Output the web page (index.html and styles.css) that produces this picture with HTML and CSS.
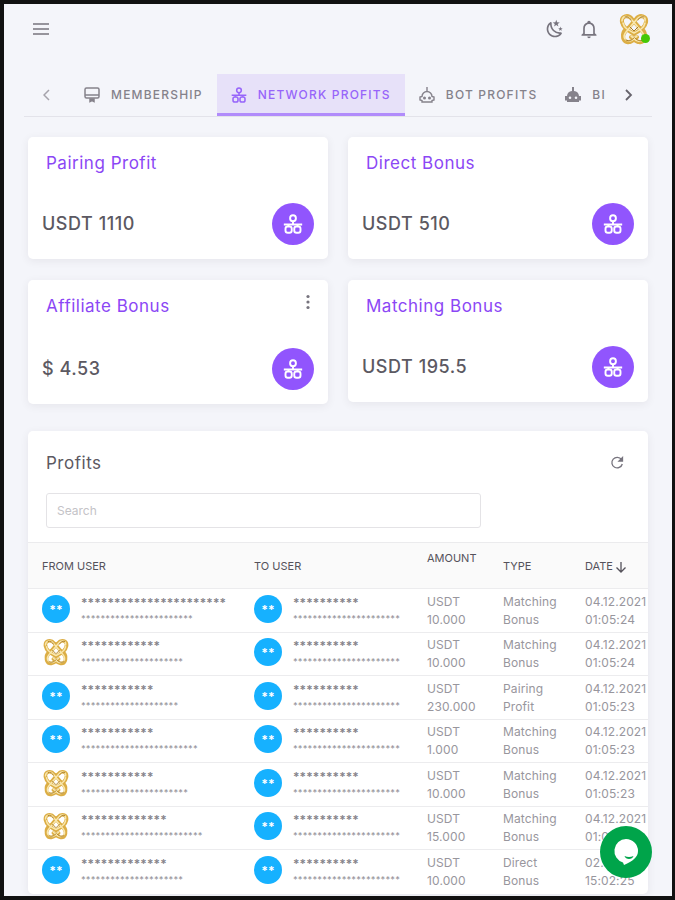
FILE: index.html
```html
<!DOCTYPE html>
<html lang="en">
<head>
    <meta charset="UTF-8">
    <meta name="viewport" content="width=device-width, initial-scale=1.0">
    <title>Network Profits</title>
    <link rel="stylesheet" href="styles.css">
</head>
<body>

    <!-- Shared icons -->
    <svg class="sprite" aria-hidden="true">
        <symbol id="network" viewBox="0 0 24 24">
            <g fill="none" stroke="currentColor" stroke-width="2.3">
                <circle cx="12" cy="5" r="3.500"/>
                <path d="M12 8.500v4M1 12.500h22M6.500 12.500v2M17.500 12.500v2"/>
                <rect x="3" y="15" width="7.500" height="7.500" rx="2.800"/>
                <rect x="13.500" y="15" width="7.500" height="7.500" rx="2.800"/>
            </g>
        </symbol>
        <symbol id="gold" viewBox="0 0 32 32">
            <g fill="none" stroke-linecap="round">
                <g stroke="#dcae45" stroke-width="4">
                    <path d="M4 9C3 3 10 1 14 6l11 13c4 5 1 11-4 10-3 0-5-3-8-5"/>
                    <path d="M28 9c1-6-6-8-10-3L7 19c-4 5-1 11 4 10 3 0 5-3 8-5"/>
                    <path d="M4 9c1 6 6 8 12 12M28 9c-1 6-6 8-12 12M10 15c-4 2-5 4-5 7M22 15c4 2 5 4 5 7"/>
                </g>
                <g stroke="#f9e7ae" stroke-width="1.600">
                    <path d="M4 8C4 3 10 2 13 6l11 13c4 5 1 10-4 9-3 0-4-3-7-5"/>
                    <path d="M27 8c1-5-5-6-8-2L8 19c-4 5-1 9 4 9 3 0 4-3 7-5"/>
                    <path d="M5 10c1 5 5 7 11 10M27 10c-1 5-5 7-11 10"/>
                </g>
                <path stroke="#a87a22" stroke-width="1" d="M7 4c3-1 5 1 6 3M26 4c-3-1-5 1-6 3M12 14l4 4 4-4M8 27c3 2 6 0 8-2M25 27c-3 2-6 0-8-2"/>
            </g>
        </symbol>
    </svg>

    <div class="app">
        <header class="topbar">
            <button class="icon-btn" aria-label="Menu">
                <svg width="16" height="12" viewBox="0 0 16 12" fill="none" stroke="currentColor" stroke-width="1.500"><path d="M0 1h16M0 6h16M0 11h16"/></svg>
            </button>
            <div class="topbar-actions">
                <button class="icon-btn" aria-label="Dark mode">
                    <svg width="20" height="20" viewBox="0 0 24 24" fill="currentColor"><path d="M17.750 4.090l-2.530 1.940.910 3.060-2.630-1.810-2.630 1.810.910-3.060-2.530-1.940L12.440 4l1.060-3 1.060 3 3.190.090m3.500 6.910l-1.640 1.250.590 1.980-1.700-1.170-1.700 1.170.590-1.980L15.750 11l2.060-.050L18.500 9l.690 1.950 2.060.050m-2.280 4.950c.830-.080 1.720 1.100 1.190 1.850-.320.450-.660.870-1.080 1.270C15.170 23 8.840 23 4.940 19.070c-3.910-3.900-3.910-10.240 0-14.140.400-.400.820-.760 1.270-1.080.750-.530 1.930.360 1.850 1.190-.270 2.860.690 5.830 2.890 8.020a9.960 9.960 0 0 0 8.020 2.890m-1.640 2.020a12.080 12.080 0 0 1-7.800-3.470c-2.170-2.190-3.330-5-3.490-7.820-2.810 3.140-2.700 7.960.310 10.980 3.020 3.010 7.840 3.120 10.980.310z"/></svg>
                </button>
                <button class="icon-btn" aria-label="Notifications">
                    <svg width="20" height="20" viewBox="0 0 24 24" fill="currentColor"><path d="M10 21h4c0 1.100-.900 2-2 2s-2-.900-2-2m11-2v1H3v-1l2-2v-6c0-3.100 2-5.800 5-6.700V4c0-1.100.900-2 2-2s2 .900 2 2v.300c3 .900 5 3.600 5 6.700v6l2 2m-4-8c0-2.800-2.200-5-5-5s-5 2.200-5 5v7h10v-7z"/></svg>
                </button>
                <button class="profile" aria-label="Account">
                    <svg width="32" height="32"><use href="#gold"/></svg>
                    <span class="online"></span>
                </button>
            </div>
        </header>

        <nav class="tabs">
            <button class="scroll-btn prev" aria-label="Previous tabs">
                <svg width="8" height="12" viewBox="0 0 8 12" fill="none" stroke="currentColor" stroke-width="1.500"><path d="M6 1L1 6l5 5"/></svg>
            </button>
            <div class="tab-list">
                <a class="tab" href="#membership">
                    <svg width="16" height="16" viewBox="0 0 16 16" fill="none" stroke="currentColor" stroke-width="1.500"><rect x="1" y="1" width="14" height="10" rx="1.500"/><path d="M1 8h14"/><path fill="currentColor" d="M6 12h4v2.500l-2-1-2 1z"/></svg>
                    Membership
                </a>
                <a class="tab active" href="#network-profits">
                    <svg width="16" height="16"><use href="#network"/></svg>
                    Network Profits
                </a>
                <a class="tab" href="#bot-profits">
                    <svg width="16" height="16" viewBox="0 0 16 16" fill="none" stroke="currentColor" stroke-width="1.400"><path d="M8 0v4.500M3 9.500a5 5 0 0 1 10 0l2 .500v3l-2 .500V15H3v-1.500L1 13v-3z"/><circle cx="5.500" cy="11" r=".8"/><circle cx="10.500" cy="11" r=".8"/></svg>
                    Bot Profits
                </a>
                <a class="tab" href="#bi">
                    <svg width="16" height="16" viewBox="0 0 16 16" fill="currentColor"><path fill-rule="evenodd" d="M7 0h2v4a5.500 5.500 0 0 1 5 5h2v4.500h-2V15H2v-1.500H0V9h2a5.500 5.500 0 0 1 5-5zM5 9.500a1.300 1.300 0 1 0 0 2.600 1.300 1.300 0 0 0 0-2.600zm6 0a1.300 1.300 0 1 0 0 2.600 1.300 1.300 0 0 0 0-2.600z"/></svg>
                    BI
                </a>
            </div>
            <button class="scroll-btn next" aria-label="Next tabs">
                <svg width="8" height="12" viewBox="0 0 8 12" fill="none" stroke="currentColor" stroke-width="1.800"><path d="M1 1l5 5-5 5"/></svg>
            </button>
        </nav>

        <main>
            <section class="stats">
                <article class="card stat">
                    <h2>Pairing Profit</h2>
                    <div class="stat-row">
                        <p>USDT 1110</p>
                        <span class="badge"><svg width="20" height="20"><use href="#network"/></svg></span>
                    </div>
                </article>
                <article class="card stat">
                    <h2>Direct Bonus</h2>
                    <div class="stat-row">
                        <p>USDT 510</p>
                        <span class="badge"><svg width="20" height="20"><use href="#network"/></svg></span>
                    </div>
                </article>
                <article class="card stat">
                    <div class="stat-head">
                        <h2>Affiliate Bonus</h2>
                        <button class="icon-btn" aria-label="More">
                            <svg width="6" height="16" viewBox="0 0 6 16" fill="currentColor"><circle cx="3" cy="2.500" r="1.600"/><circle cx="3" cy="8" r="1.600"/><circle cx="3" cy="13.500" r="1.600"/></svg>
                        </button>
                    </div>
                    <div class="stat-row">
                        <p>$ 4.53</p>
                        <span class="badge"><svg width="20" height="20"><use href="#network"/></svg></span>
                    </div>
                </article>
                <article class="card stat">
                    <h2>Matching Bonus</h2>
                    <div class="stat-row">
                        <p>USDT 195.5</p>
                        <span class="badge"><svg width="20" height="20"><use href="#network"/></svg></span>
                    </div>
                </article>
            </section>

            <section class="card profits">
                <div class="profits-head">
                    <h2>Profits</h2>
                    <button class="icon-btn" aria-label="Refresh">
                        <svg width="14" height="14" viewBox="0 0 14 14" fill="none" stroke="currentColor" stroke-width="1.300"><path d="M11.500 3.500A5.300 5.300 0 1 0 12.300 8"/><path fill="currentColor" d="M12.500 1.500v3.500H9z"/></svg>
                    </button>
                </div>
                <div class="search">
                    <input type="text" placeholder="Search" aria-label="Search">
                </div>
                <table>
                    <thead>
                        <tr>
                            <th class="col-from">From user</th>
                            <th class="col-to">To user</th>
                            <th class="col-amount">Amount</th>
                            <th class="col-type">Type</th>
                            <th>Date <svg width="12" height="12" viewBox="0 0 12 12" fill="none" stroke="currentColor" stroke-width="1.300"><path d="M6 1v10M1.500 6.500L6 11l4.500-4.500"/></svg></th>
                        </tr>
                    </thead>
                    <tbody id="rows"></tbody>
                </table>
            </section>
        </main>

        <button class="chat" aria-label="Chat">
            <svg width="28" height="28" viewBox="0 0 28 28"><path fill="#fff" d="M14 1a12 12 0 0 1 12 12c0 6-5 10-14 14l-1-2.500A12 12 0 0 1 14 1z"/><path fill="#00a44a" d="M12.500 18c3 1.200 6 1.200 9 0-1 4-8 4-9 0z"/></svg>
        </button>
    </div>

    <script>
        // stars: hidden name length, hidden email length
        const rows = [
            { from: [22, 23], gold: false, amount: "10.000", type: "Matching Bonus", date: "04.12.2021", time: "01:05:24" },
            { from: [12, 21], gold: true, amount: "10.000", type: "Matching Bonus", date: "04.12.2021", time: "01:05:24" },
            { from: [11, 20], gold: false, amount: "230.000", type: "Pairing Profit", date: "04.12.2021", time: "01:05:23" },
            { from: [11, 24], gold: false, amount: "1.000", type: "Matching Bonus", date: "04.12.2021", time: "01:05:23" },
            { from: [11, 22], gold: true, amount: "10.000", type: "Matching Bonus", date: "04.12.2021", time: "01:05:23" },
            { from: [13, 25], gold: true, amount: "15.000", type: "Matching Bonus", date: "04.12.2021", time: "01:05:23" },
            { from: [13, 21], gold: false, amount: "10.000", type: "Direct Bonus", date: "02.12.2021", time: "15:02:25" }
        ];

        function user(stars, gold) {
            const avatar = gold
                ? '<svg width="28" height="28"><use href="#gold"/></svg>'
                : '<span class="initials">**</span>';
            return `<div class="user">${avatar}<div>
                <div class="name">${"*".repeat(stars[0])}</div>
                <div class="email">${"*".repeat(stars[1])}</div>
            </div></div>`;
        }

        document.getElementById("rows").innerHTML = rows.map(r => `
            <tr>
                <td>${user(r.from, r.gold)}</td>
                <td>${user([10, 22], false)}</td>
                <td>USDT<br>${r.amount}</td>
                <td>${r.type.replace(" ", "<br>")}</td>
                <td>${r.date}<br>${r.time}</td>
            </tr>`).join("");
    </script>
</body>
</html>
```
FILE: styles.css
```css
/* General */
* {
    box-sizing: border-box;
}

body {
    margin: 0;
    background-color: #111;
    font-family: Inter, "Liberation Sans", sans-serif;
    color: #5c5962;
}

h2, p {
    margin: 0;
    letter-spacing: 0.03em;
}

h2 {
    font-size: 17px;
    font-weight: 400;
    line-height: 24px;
}

button {
    padding: 0;
    border: none;
    background: none;
    color: inherit;
    cursor: pointer;
}

svg {
    display: block;
    flex: none;
}

.sprite {
    position: absolute;
    width: 0;
    height: 0;
}

.app {
    height: 100vh;
    overflow: hidden;
    padding: 0 20px;
    border: 4px solid #111;
    border-right-width: 3px;
    background-color: #f4f5fa;
}

.icon-btn {
    color: #77747e;
}

/* Top bar */
.topbar {
    display: flex;
    justify-content: space-between;
    align-items: center;
    height: 50px;
    padding: 0 2px 0 9px;
}

.topbar-actions {
    display: flex;
    align-items: center;
    gap: 14px;
}

.profile {
    position: relative;
    margin-left: 5px;
}

.online {
    position: absolute;
    right: 0;
    bottom: 2px;
    width: 9px;
    height: 9px;
    border-radius: 50%;
    background-color: #45c805;
}

/* Tabs */
.tabs {
    display: flex;
    margin-top: 20px;
    border-bottom: 1px solid #e3e3ea;
}

.scroll-btn {
    display: flex;
    flex: none;
    align-items: center;
    justify-content: center;
    width: 46px;
    color: #66636c;
}

.scroll-btn.prev {
    color: #a5a3ab;
}

.tab-list {
    display: flex;
    flex: 1;
    overflow: hidden;
}

.tab {
    display: flex;
    flex: none;
    align-items: center;
    gap: 11px;
    height: 42px;
    padding: 2px 14px 0;
    border-bottom: 3px solid transparent;
    color: #85828b;
    font-size: 12px;
    font-weight: 500;
    letter-spacing: 0.1em;
    text-transform: uppercase;
    text-decoration: none;
}

.tab.active {
    border-color: #b18bfb;
    background-color: #e7e1f9;
    color: #9765fa;
}

/* Cards */
.card {
    border-radius: 5px;
    background-color: #fff;
    box-shadow: 0 2px 8px rgba(58, 53, 65, 0.08);
}

main {
    padding: 0 4px;
}

.stats {
    display: grid;
    grid-template-columns: 1fr 1fr;
    align-items: start;
    gap: 21px 20px;
    padding: 20px 0 27px;
}

.stat {
    padding: 14px;
}

.stat h2 {
    padding-left: 4px;
    color: #8b47f5;
}

.stat-head {
    display: flex;
    justify-content: space-between;
    align-items: flex-start;
    height: 26px;
    padding-right: 3px;
}

.stat-row {
    display: flex;
    justify-content: space-between;
    align-items: center;
    margin-top: 28px;
}

.stat-row p {
    font-size: 18px;
    font-weight: 500;
    line-height: 24px;
}

.badge {
    display: flex;
    align-items: center;
    justify-content: center;
    width: 42px;
    height: 42px;
    border-radius: 50%;
    background-color: #9155fd;
    color: #fff;
}

/* Profits table */
.profits {
    overflow: hidden;
}

.profits-head {
    display: flex;
    justify-content: space-between;
    align-items: center;
    padding: 20px 24px 18px 18px;
}

.search {
    padding: 0 18px 14px;
}

.search input {
    display: block;
    width: 100%;
    max-width: 435px;
    height: 35px;
    padding: 0 10px;
    border: 1px solid #e4e3e6;
    border-radius: 3px;
    font-family: inherit;
    font-size: 12px;
}

.search input::placeholder {
    color: #c4c3c7;
}

table {
    width: 100%;
    table-layout: fixed;
    border-collapse: collapse;
}

th, td {
    padding: 0 0 0 14px;
    text-align: left;
    white-space: nowrap;
}

thead tr {
    height: 46px;
    border-top: 1px solid #ebebed;
    background-color: #fafafa;
}

th {
    color: #55525b;
    font-size: 11px;
    font-weight: 400;
    text-transform: uppercase;
}

th svg {
    display: inline-block;
    margin-left: -1px;
    vertical-align: middle;
}

.col-from {
    width: 212px;
}

.col-to {
    width: 173px;
}

.col-amount {
    width: 76px;
    padding-bottom: 16px;
}

.col-type {
    width: 82px;
}

tbody tr {
    height: 44px;
    border-top: 1px solid #ececee;
}

tbody tr:nth-child(even) {
    height: 43px;
}

td {
    color: #98969d;
    font-size: 12px;
    letter-spacing: 0.01em;
    line-height: 18px;
}

.user {
    display: flex;
    align-items: flex-start;
    gap: 11px;
}

.initials {
    width: 28px;
    height: 28px;
    border-radius: 50%;
    background-color: #16b1ff;
    color: #fff;
    font-size: 12px;
    font-weight: 700;
    line-height: 30px;
    text-align: center;
}

.name {
    color: #85838a;
    font-weight: 600;
    line-height: 16px;
}

.email {
    font-size: 9px;
    font-weight: 500;
    letter-spacing: 0.02em;
    line-height: 16px;
}

/* Chat button */
.chat {
    position: fixed;
    right: 23px;
    bottom: 22px;
    display: flex;
    align-items: center;
    justify-content: center;
    width: 52px;
    height: 52px;
    border-radius: 50%;
    background-color: #00a44a;
}
```
